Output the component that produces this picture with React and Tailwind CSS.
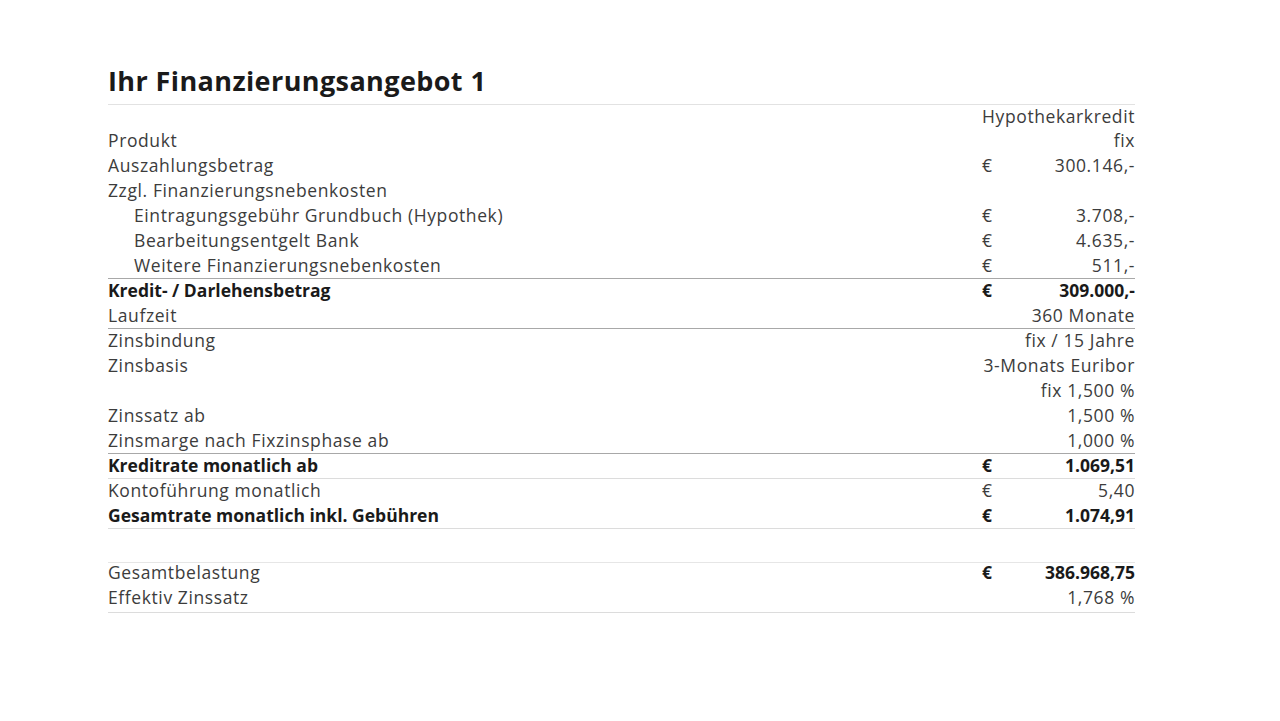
import React from 'react';

const rows = [
  { label: 'Auszahlungsbetrag', euro: true, value: '300.146,-' },
  { label: 'Zzgl. Finanzierungsnebenkosten' },
  { label: 'Eintragungsgebühr Grundbuch (Hypothek)', indent: true, euro: true, value: '3.708,-' },
  { label: 'Bearbeitungsentgelt Bank', indent: true, euro: true, value: '4.635,-' },
  { label: 'Weitere Finanzierungsnebenkosten', indent: true, euro: true, value: '511,-', line: 'dark' },
  { label: 'Kredit- / Darlehensbetrag', bold: true, euro: true, value: '309.000,-' },
  { label: 'Laufzeit', value: '360 Monate', line: 'dark' },
  { label: 'Zinsbindung', value: 'fix / 15 Jahre' },
  { label: 'Zinsbasis', value: '3-Monats Euribor' },
  { label: '', value: 'fix 1,500 %' },
  { label: 'Zinssatz ab', value: '1,500 %' },
  { label: 'Zinsmarge nach Fixzinsphase ab', value: '1,000 %', line: 'dark' },
  { label: 'Kreditrate monatlich ab', bold: true, euro: true, value: '1.069,51', line: 'light' },
  { label: 'Kontoführung monatlich', euro: true, value: '5,40' },
  { label: 'Gesamtrate monatlich inkl. Gebühren', bold: true, euro: true, value: '1.074,91', line: 'light' },
];

const summary = [
  { label: 'Gesamtbelastung', euro: true, value: '386.968,75', boldValue: true, tight: true },
  { label: 'Effektiv Zinssatz', value: '1,768 %', line: 'light', tight: true },
];

function Row({ row }) {
  const border =
    row.line === 'dark'
      ? 'border-b border-[#a8a8a8]'
      : row.line === 'light'
      ? 'border-b border-[#dcdcdc]'
      : '';
  const strong = row.bold ? 'font-bold tracking-[0px] text-[#1a1a1a]' : '';
  const strongValue = row.boldValue ? 'font-bold tracking-[0px] text-[#1a1a1a]' : '';
  return (
    <div
      className={`flex h-[25px] items-start justify-between ${row.tight ? 'leading-[19px]' : 'leading-[22px]'} ${border}`}
    >
      <span className={`whitespace-nowrap ${row.indent ? 'pl-[26px]' : ''} ${strong}`}>{row.label}</span>
      {row.euro ? (
        <div className={`flex w-[153px] ${strong}`}>
          <span className={strongValue}>€</span>
          <span className={`ml-auto ${strongValue}`}>{row.value}</span>
        </div>
      ) : (
        <span className="whitespace-nowrap text-right">{row.value}</span>
      )}
    </div>
  );
}

export default function App() {
  return (
    <div
      className="min-h-[721px] w-full bg-white pt-[62px] text-[17.5px] tracking-[0.6px] text-[#3c3c3c]"
      style={{ fontFamily: '"Open Sans", "Liberation Sans", sans-serif' }}
    >
      <div className="ml-[108px] w-[1027px]">
        <h1 className="border-b border-[#e2e2e2] pb-[4px] text-[27px] font-bold leading-[38px] tracking-[0.4px] text-[#1a1a1a]">
          Ihr Finanzierungsangebot 1
        </h1>
        <div className="flex h-[49px] items-end justify-between pb-[3px]">
          <span className="leading-[22px]">Produkt</span>
          <div className="flex flex-col items-end leading-[25px]">
            <span>Hypothekarkredit</span>
            <span className="leading-[22px]">fix</span>
          </div>
        </div>
        {rows.map((row, i) => (
          <Row key={i} row={row} />
        ))}
        <div className="h-[34px] border-b border-[#e6e6e6]" />
        {summary.map((row, i) => (
          <Row key={i} row={row} />
        ))}
      </div>
    </div>
  );
}
